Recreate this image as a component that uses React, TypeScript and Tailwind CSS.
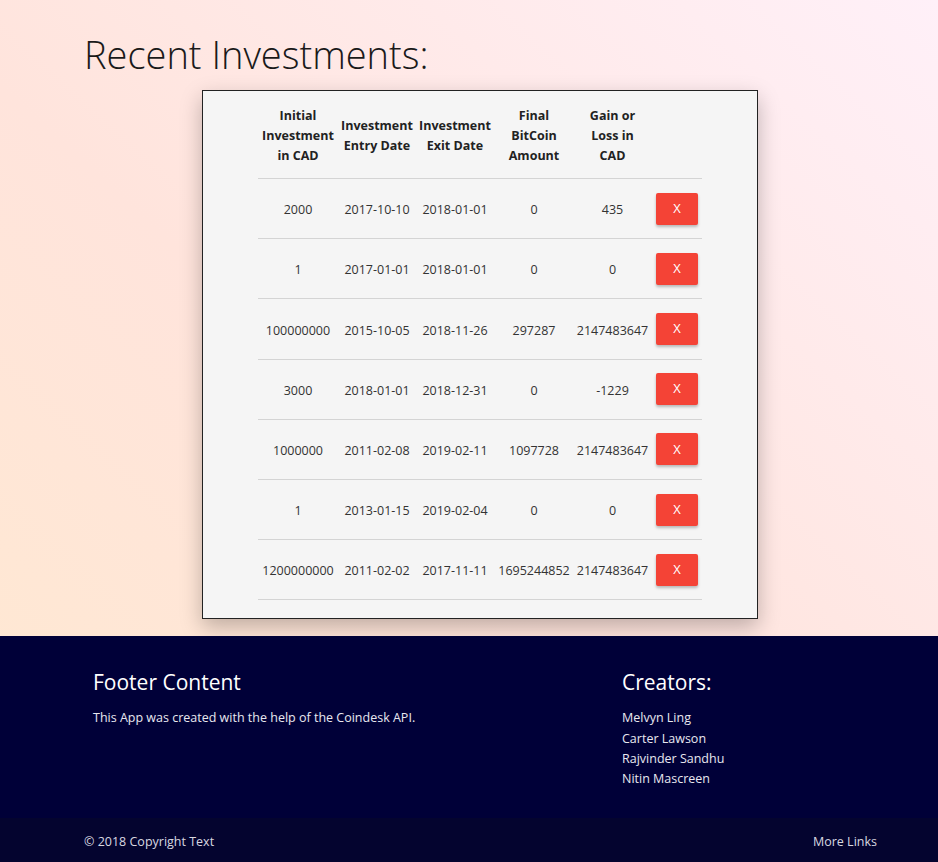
import React from 'react';

interface Investment {
  initial: string;
  entry: string;
  exit: string;
  btc: string;
  gain: string;
}

const investments: Investment[] = [
  { initial: '2000', entry: '2017-10-10', exit: '2018-01-01', btc: '0', gain: '435' },
  { initial: '1', entry: '2017-01-01', exit: '2018-01-01', btc: '0', gain: '0' },
  { initial: '100000000', entry: '2015-10-05', exit: '2018-11-26', btc: '297287', gain: '2147483647' },
  { initial: '3000', entry: '2018-01-01', exit: '2018-12-31', btc: '0', gain: '-1229' },
  { initial: '1000000', entry: '2011-02-08', exit: '2019-02-11', btc: '1097728', gain: '2147483647' },
  { initial: '1', entry: '2013-01-15', exit: '2019-02-04', btc: '0', gain: '0' },
  { initial: '1200000000', entry: '2011-02-02', exit: '2017-11-11', btc: '1695244852', gain: '2147483647' },
];

const cols = 'grid grid-cols-[80px_78px_78px_80px_77px_51px] items-center';

export default function App() {
  return (
    <div className="min-h-screen flex flex-col font-['Segoe_UI','Open_Sans',sans-serif] bg-[linear-gradient(to_top_right,#ffe9d0_0%,#ffe4dc_45%,#fff0f8_100%)]">
      <main className="flex-1 pt-[28px] pb-[17px]">
        <h1 className="pl-[84px] text-[38px] leading-[52px] font-light text-[#1a1a1a]">Recent Investments:</h1>
        <div className="ml-[202px] mt-[10px] w-[556px] bg-[#f5f5f5] border border-[#222] shadow-[0_8px_20px_rgba(0,0,0,0.25)] px-[55px]">
          <div className={`${cols} h-[88px] pt-[2px] border-b border-[#d4d4d4] text-[12.5px] font-bold leading-[20px] text-[#222] text-center`}>
            <div>Initial<br />Investment<br />in CAD</div>
            <div>Investment<br />Entry Date</div>
            <div>Investment<br />Exit Date</div>
            <div>Final<br />BitCoin<br />Amount</div>
            <div>Gain or<br />Loss in<br />CAD</div>
            <div />
          </div>
          {investments.map((inv, i) => (
            <div key={i} className={`${cols} h-[60.2px] border-b border-[#d4d4d4] text-[12.5px] text-[#333] text-center`}>
              <div className="pt-[4px]">{inv.initial}</div>
              <div className="pt-[4px]">{inv.entry}</div>
              <div className="pt-[4px]">{inv.exit}</div>
              <div className="pt-[4px]">{inv.btc}</div>
              <div className="pt-[4px]">{inv.gain}</div>
              <div className="pl-[5px] flex">
                <button className="w-[42px] h-[32px] bg-[#f44336] text-white text-[13px] rounded-[2px] shadow-[0_2px_3px_rgba(0,0,0,0.25)]">
                  X
                </button>
              </div>
            </div>
          ))}
          <div className="h-[18px]" />
        </div>
      </main>
      <footer className="bg-[#000038] text-white">
        <div className="flex pt-[32px] h-[182px]">
          <div className="pl-[93px] w-[622px]">
            <h5 className="text-[21px] leading-[28px]">Footer Content</h5>
            <p className="mt-[13px] text-[12.5px] text-[#e8e8f0]">This App was created with the help of the Coindesk API.</p>
          </div>
          <div>
            <h5 className="text-[21px] leading-[28px]">Creators:</h5>
            <ul className="mt-[12px] text-[12.5px] leading-[20.3px] text-[#e8e8f0]">
              <li>Melvyn Ling</li>
              <li>Carter Lawson</li>
              <li>Rajvinder Sandhu</li>
              <li>Nitin Mascreen</li>
            </ul>
          </div>
        </div>
        <div className="bg-[#04042f] h-[44px] flex items-center justify-between pt-[5px] pl-[84px] pr-[61px] text-[12.5px] text-[#d8d8e0]">
          <span>© 2018 Copyright Text</span>
          <span>More Links</span>
        </div>
      </footer>
    </div>
  );
}
